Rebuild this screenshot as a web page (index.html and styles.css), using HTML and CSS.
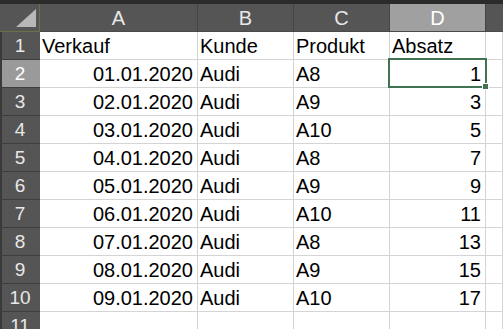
FILE: index.html
```html
<!DOCTYPE html>
<html lang="de">
<head>
<meta charset="utf-8">
<title>Tabelle</title>
<link rel="stylesheet" href="styles.css">
</head>
<body>
<div class="sheet">
  <div class="topbar"></div>
  <div class="grid">
    <div class="corner"><span class="tri"></span></div>
    <div class="colhead">A</div>
    <div class="colhead">B</div>
    <div class="colhead">C</div>
    <div class="colhead sel">D</div>
    <div class="colhead last"></div>

    <div class="rowhead">1</div>
    <div class="cell">Verkauf</div>
    <div class="cell">Kunde</div>
    <div class="cell">Produkt</div>
    <div class="cell">Absatz</div>
    <div class="cell"></div>

    <div class="rowhead sel">2</div>
    <div class="cell num">01.01.2020</div>
    <div class="cell">Audi</div>
    <div class="cell">A8</div>
    <div class="cell num active">1<span class="handle"></span></div>
    <div class="cell"></div>

    <div class="rowhead">3</div>
    <div class="cell num">02.01.2020</div>
    <div class="cell">Audi</div>
    <div class="cell">A9</div>
    <div class="cell num">3</div>
    <div class="cell"></div>

    <div class="rowhead">4</div>
    <div class="cell num">03.01.2020</div>
    <div class="cell">Audi</div>
    <div class="cell">A10</div>
    <div class="cell num">5</div>
    <div class="cell"></div>

    <div class="rowhead">5</div>
    <div class="cell num">04.01.2020</div>
    <div class="cell">Audi</div>
    <div class="cell">A8</div>
    <div class="cell num">7</div>
    <div class="cell"></div>

    <div class="rowhead">6</div>
    <div class="cell num">05.01.2020</div>
    <div class="cell">Audi</div>
    <div class="cell">A9</div>
    <div class="cell num">9</div>
    <div class="cell"></div>

    <div class="rowhead">7</div>
    <div class="cell num">06.01.2020</div>
    <div class="cell">Audi</div>
    <div class="cell">A10</div>
    <div class="cell num">11</div>
    <div class="cell"></div>

    <div class="rowhead">8</div>
    <div class="cell num">07.01.2020</div>
    <div class="cell">Audi</div>
    <div class="cell">A8</div>
    <div class="cell num">13</div>
    <div class="cell"></div>

    <div class="rowhead">9</div>
    <div class="cell num">08.01.2020</div>
    <div class="cell">Audi</div>
    <div class="cell">A9</div>
    <div class="cell num">15</div>
    <div class="cell"></div>

    <div class="rowhead">10</div>
    <div class="cell num">09.01.2020</div>
    <div class="cell">Audi</div>
    <div class="cell">A10</div>
    <div class="cell num">17</div>
    <div class="cell"></div>

    <div class="rowhead">11</div>
    <div class="cell"></div>
    <div class="cell"></div>
    <div class="cell"></div>
    <div class="cell"></div>
    <div class="cell"></div>
  </div>
</div>
</body>
</html>
```
FILE: styles.css
```css
html, body {
  margin: 0;
  padding: 0;
  background: #ffffff;
}
body {
  width: 503px;
  height: 329px;
  overflow: hidden;
  font-family: "Liberation Sans", Arial, sans-serif;
}
.sheet {
  display: flex;
  flex-direction: column;
}
.topbar {
  height: 4px;
  background: #2b2b2b;
}
.grid {
  display: grid;
  grid-template-columns: 40px 158px 96px 96px 96px 1fr;
  grid-auto-rows: 28px;
}
.grid > div {
  box-sizing: border-box;
  display: flex;
  align-items: flex-end;
  line-height: 22px;
  padding-bottom: 2px;
  white-space: nowrap;
  overflow: visible;
}
.corner {
  position: relative;
  background: #555555;
  border-right: 1px solid #6f6f45;
  border-bottom: 1px solid #6f6f45;
}
.corner .tri {
  position: absolute;
  left: 16px;
  top: 5px;
  width: 20px;
  height: 18px;
  background: #b8b8b8;
  clip-path: polygon(100% 0, 100% 100%, 0 100%);
}
.colhead {
  background: #555555;
  color: #e8e8e8;
  font-size: 20px;
  justify-content: center;
  border-right: 1px solid #454545;
  border-bottom: 1px solid #4a4a4a;
}
.colhead.sel {
  background: #a0a0a0;
  color: #ffffff;
}
.colhead.last {
  border-right: none;
}
.rowhead {
  background: #555555;
  color: #e8e8e8;
  font-size: 19px;
  justify-content: center;
  border-bottom: 1px solid #3e3e3e;
  box-shadow: inset 2px 0 0 #3a3a3a;
}
.rowhead.sel {
  background: #9a9a9a;
  color: #ffffff;
}
.cell {
  background: #ffffff;
  color: #000000;
  font-size: 20px;
  padding-left: 2px;
  padding-right: 4px;
  border-right: 1px solid #d4d4d4;
  border-bottom: 1px solid #d4d4d4;
}
.cell.num {
  justify-content: flex-end;
}
.cell.active {
  position: relative;
}
.cell.active::after {
  content: "";
  position: absolute;
  left: -2px;
  top: -2px;
  right: -2px;
  bottom: -1px;
  border: 2px solid #417252;
  pointer-events: none;
}
.handle {
  position: absolute;
  right: -4px;
  bottom: -3px;
  width: 5px;
  height: 5px;
  background: #417252;
  border: 1px solid #ffffff;
  z-index: 2;
}
```
